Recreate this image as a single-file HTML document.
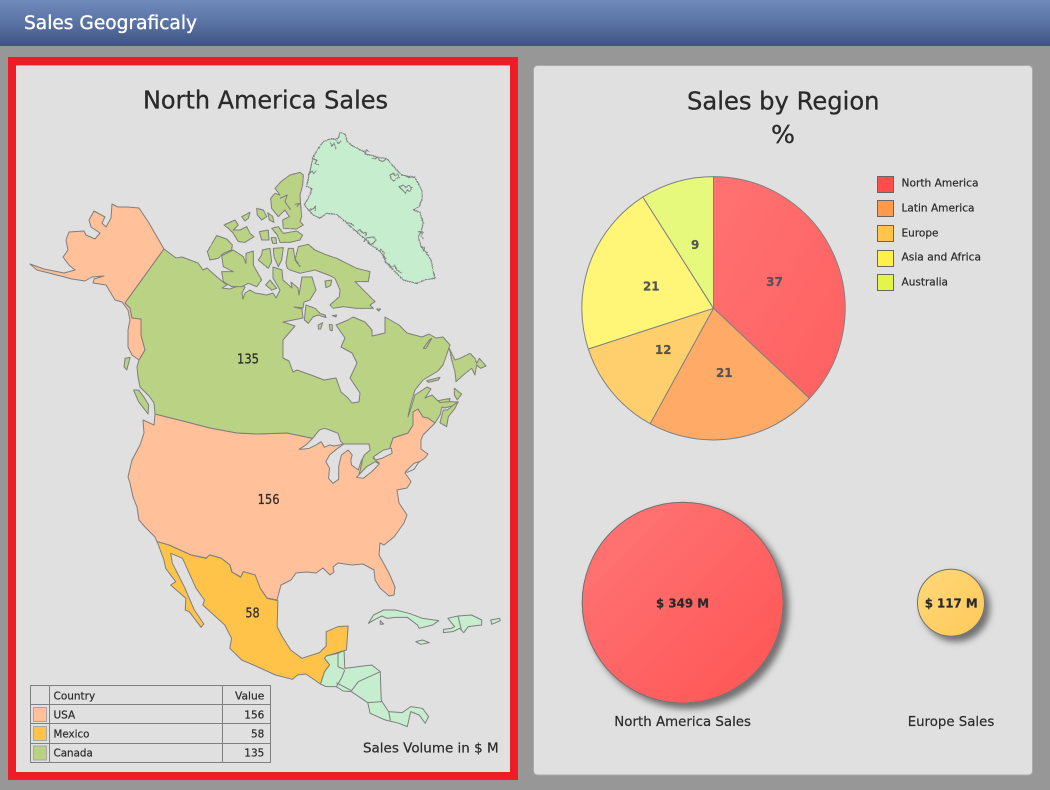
<!DOCTYPE html>
<html><head><meta charset="utf-8"><title>Sales Geograficaly</title>
<style>
html,body{margin:0;padding:0;width:1050px;height:790px;overflow:hidden;background:#979797}
svg{display:block}
text{font-family:"DejaVu Sans","Liberation Sans",sans-serif;stroke:#2a2a2a;stroke-width:.2}
.m *{vector-effect:non-scaling-stroke}
.m polygon,.m polyline,.m path{stroke:#7e7e7e;stroke-width:1;stroke-linejoin:round}
.ca{fill:#b9d283}.us{fill:#ffc09a}.mx{fill:#ffc34a}.ot{fill:#c6edce}.lk{fill:#e0e0e0}
.ln{fill:none}
</style></head><body>
<svg width="1050" height="790" viewBox="0 0 1050 790" xmlns="http://www.w3.org/2000/svg">
<defs>
<linearGradient id="hd" x1="0" y1="0" x2="0" y2="1"><stop offset="0" stop-color="#708abc"/><stop offset=".5" stop-color="#5a73a5"/><stop offset="1" stop-color="#3e5380"/></linearGradient>
<linearGradient id="rd" x1="0" y1="0" x2="1" y2="1"><stop offset="0" stop-color="#ff7777"/><stop offset=".8" stop-color="#ff5a5a"/></linearGradient>
<linearGradient id="rp" x1="0" y1="0" x2="1" y2="1"><stop offset="0" stop-color="#ff7272"/><stop offset="1" stop-color="#ff6060"/></linearGradient>
<linearGradient id="yb" x1="0" y1="0" x2="1" y2="1"><stop offset="0" stop-color="#ffd878"/><stop offset="1" stop-color="#ffc95a"/></linearGradient>
<filter id="sh" x="-20%" y="-20%" width="150%" height="150%"><feDropShadow dx="5" dy="5" stdDeviation="3.5" flood-color="#000" flood-opacity=".5"/></filter>
<filter id="rg" x="-5%" y="-5%" width="110%" height="110%" color-interpolation-filters="sRGB"><feTurbulence type="fractalNoise" baseFrequency=".28" numOctaves="2" seed="4"/><feDisplacementMap in="SourceGraphic" scale="6" xChannelSelector="R" yChannelSelector="G"/></filter>
<filter id="rs" x="-5%" y="-5%" width="110%" height="110%" color-interpolation-filters="sRGB"><feTurbulence type="fractalNoise" baseFrequency=".3" numOctaves="2" seed="7"/><feDisplacementMap in="SourceGraphic" scale="3" xChannelSelector="R" yChannelSelector="G"/></filter>
</defs>

<rect width="1050" height="790" fill="#979797"/>
<rect width="1050" height="46" fill="url(#hd)"/>
<text x="24" y="29" font-size="18.5" fill="#fff" style="stroke:#fff;stroke-width:.35" textLength="173" lengthAdjust="spacingAndGlyphs">Sales Geograficaly</text>

<rect x="8" y="57" width="510" height="723" fill="#ee1c25"/>
<rect x="16" y="65" width="494" height="707" fill="#e0e0e0"/>
<rect x="16" y="65" width="494" height="1" fill="#aaa"/>
<text x="143" y="108.6" font-size="24.5" fill="#2a2a2a" style="stroke-width:.3" textLength="245" lengthAdjust="spacingAndGlyphs">North America Sales</text>

<g class="m">
<polygon class="us" points="164,249 149,223 139,208 128,207 118,207 112,204 111,218 106,227 102,223 105,217 94,211 89,220 91,227 100,233 95,239 86,235 84,231 69,232 66,240 68,250 63,257 69,265 75,270 64,273 44,269 30,264 37,270 49,273 72,279 85,281 92,277 104,276 94,279 93,283 106,285 115,300 122,302 128,310 130,320 128,330 128,347 132,355 139,360 145,350 141,335 141,319 132,318 130,308 125,303"/>
<polygon class="us" points="155,414 179,420 210,428 237,433 257,434 287,433 311,438 343,444 365,447 361,467 359,475 369,470 379,463 373,458 381,455 392,452 390,447 393,438 408,433 413,425 413,412 418,409 423,417 428,418 435,423 428,430 423,435 421,440 421,449 425,452 428,454 425,458 422,460 415,465 407,470 405,473 410,480 411,482 407,488 397,490 399,503 407,515 404,523 394,537 384,545 380,543 379,555 389,573 395,587 394,595 389,596 380,588 375,580 374,570 363,564 352,565 338,563 333,567 334,572 330,575 323,568 316,573 306,572 296,573 291,580 281,585 277,600 267,598 260,588 255,575 243,572 241,577 232,572 230,565 221,558 210,555 206,558 191,555 169,545 157,542 155,537 145,527 139,520 137,507 133,497 130,483 128,477 132,460 140,445 144,433 143,420 154,425"/>
<polygon class="ca" points="164,249 176,258 182,257 198,263 203,270 207,268 217,277 223,282 227,285 222,288 230,289 240,285 245,287 242,293 243,299 245,293 250,290 255,293 267,295 273,293 276,298 280,290 273,278 273,267 282,270 283,280 292,288 291,282 298,288 299,295 302,277 312,277 316,290 310,300 304,302 303,308 294,307 302,309 303,318 283,322 295,326 283,340 283,358 289,361 293,372 297,370 311,375 324,380 336,378 341,392 348,398 352,403 359,402 360,393 350,378 357,363 352,353 341,347 345,338 336,325 348,320 353,317 365,322 372,330 372,336 385,333 385,317 399,325 407,333 422,337 429,334 436,338 443,337 450,345 443,365 438,371 423,380 415,390 410,407 408,417 412,405 415,395 427,387 431,389 425,398 432,395 438,401 457,402 455,405 445,408 442,407 440,415 435,423 428,418 423,417 418,409 413,412 413,425 408,433 393,438 390,447 392,452 381,455 373,458 379,463 369,470 359,475 361,467 365,447 343,444 325,437 311,438 287,433 257,434 237,433 210,428 179,420 155,414 154,403 149,396 140,387 138,377 137,367 139,360 145,350 141,335 141,319 132,318 130,308 125,303"/>
<g transform="translate(0,270) scale(.338,.3333)">
<polygon class="lk" points="885,538 905,525 925,505 945,480 960,475 975,480 1000,490 1008,515 1017,522 990,528 975,525 960,532 950,515 935,525 915,535 900,537"/>
<polygon class="lk" points="1017,522 1092,522 1095,540 1078,555 1068,575 1060,600 1040,585 1038,570 1042,555 1030,540 1010,555 1002,590 1002,628 985,640 972,625 975,595 964,575 975,555 995,538"/>
<polygon class="lk" points="1055,622 1075,625 1100,605 1122,582 1110,575 1085,590 1068,608"/>
<polygon class="lk" points="1105,560 1135,540 1158,535 1160,550 1130,565 1110,570"/>
<polygon class="ca" points="395,360 410,395 438,432 440,405 425,380 410,360"/>
<polygon class="ca" points="370,265 385,262 375,300 367,290"/>
<polygon class="lk" points="1200,605 1225,580 1240,575 1225,598 1205,607"/>
</g>
<g transform="translate(360,330) scale(.3333)" filter="url(#rs)">
<polygon class="ca" points="268,55 285,90 300,85 330,70 345,85 350,100 358,85 378,108 362,115 350,105 345,135 335,115 310,135 288,155 285,125 275,90"/>
<polygon class="ca" points="240,278 260,290 265,260 285,235 295,215 280,225 262,240 250,240"/>
<polygon class="ca" points="283,175 305,192 292,210 283,195"/>
<polygon class="ca" points="235,212 270,205 268,215 240,218"/>
<polygon class="ca" points="200,152 240,142 235,150 205,157"/>
<polygon class="ca" points="190,55 198,55 215,25 208,30"/>
</g>
<g transform="translate(200,165) scale(.3333)" filter="url(#rs)">
<polygon class="ca" points="225,70 245,48 270,30 300,22 310,30 308,60 300,90 302,120 305,155 300,170 310,180 290,192 250,190 248,165 268,155 255,135 235,155 215,130 212,100 225,85 240,90"/>
<polygon class="ca" points="215,190 235,185 250,205 290,198 308,210 300,225 270,232 240,232 232,210"/>
<polygon class="ca" points="72,180 105,165 115,180 100,195 120,195 140,185 150,205 162,215 135,232 115,230 100,205 85,190"/>
<polygon class="ca" points="170,130 190,135 200,155 185,165 172,150"/>
<polygon class="ca" points="125,155 150,142 145,160 135,168"/>
<polygon class="ca" points="203,143 218,155 222,172 208,165"/>
<polygon class="ca" points="178,200 205,195 207,225 185,225"/>
<polygon class="ca" points="213,218 228,218 230,235 218,235"/>
<polygon class="ca" points="50,212 80,222 97,240 95,255 70,265 55,280 30,285 22,260"/>
<polygon class="ca" points="65,272 100,255 130,275 138,295 138,265 160,258 160,300 185,345 170,365 145,355 125,365 95,365 70,350 65,320 100,320 70,305"/>
<polygon class="ca" points="187,255 210,250 215,290 205,310 175,285 185,270"/>
<polygon class="ca" points="220,250 250,248 245,285 235,305 222,275"/>
<polygon class="ca" points="197,360 210,345 230,370 215,375"/>
<polygon class="ca" points="270,315 300,325 345,315 385,330 405,340 420,375 418,395 390,420 400,430 430,425 470,430 520,430 510,420 525,410 500,385 465,350 505,350 510,320 470,310 440,295 410,280 375,268 345,255 325,238 295,245 285,285 300,305 285,280 280,250 265,250 258,295 262,310"/>
<polygon class="ca" points="375,348 395,345 392,362 378,368"/>
<polygon class="ca" points="318,420 345,430 360,445 375,450 378,458 355,450 340,455 325,475 313,465"/>
<polygon class="ca" points="355,480 368,473 362,492 355,492"/>
<polygon class="ca" points="388,478 397,480 397,497 390,495"/>
<polygon class="ca" points="530,432 542,432 536,438"/>
<polygon class="ca" points="397,452 410,450 408,456"/>
<polyline class="ln" points="240,100 262,90 255,110 272,135"/>
<polyline class="ln" points="285,118 300,115 290,125"/>
</g>
<g transform="translate(295,125) scale(.3333)" filter="url(#rg)">
<polygon class="ot" points="135,22 150,28 157,50 172,62 190,72 205,78 215,88 235,92 250,98 275,100 290,118 305,135 320,150 345,155 360,158 370,175 380,195 382,220 372,245 355,255 375,262 385,295 378,320 370,335 378,365 395,385 408,405 415,440 420,460 395,463 365,475 325,465 295,435 275,415 260,385 245,370 230,362 215,345 195,330 175,312 150,290 125,268 95,265 75,280 55,270 40,255 28,240 45,210 50,190 35,185 42,150 48,125 55,95 70,70 85,50 105,42 120,42 130,40"/>
<path class="ln" d="M285,150l10,-5 5,8 8,-6 5,10 -10,4 -4,8 -10,-6zM312,185l12,-4 8,6 10,-6 8,8 -6,10 -8,-4 -4,10 -8,-8 -6,-6zM52,100l14,6 -6,10 12,4M40,148l12,-10 4,8 8,-10M105,50l6,14 6,-10 6,18M120,42l10,14 8,-8M42,255l14,-4 6,-8 -2,14M145,285l12,8 10,2 10,8M185,320l10,-6 8,10 12,-2 -4,12M205,350l12,-12 18,-2 8,10 -14,14 -12,-6M245,372l10,8 2,-6 12,10 -4,6 8,12M268,410l14,8 6,8 12,-4 6,14 14,8M210,88l4,-14 8,6M230,98l10,4 8,-6 6,10 10,4 8,-8M355,155l-14,2 -10,-4M370,320l14,2 -6,12 8,8M378,365l12,2 -4,10 12,6"/>
</g>
<g transform="translate(0,530) scale(.338,.3333)">
<polygon class="ot" points="948,462 960,425 975,405 960,385 965,378 1000,370 1018,362 1020,415 1060,410 1100,405 1125,425 1128,510 1130,515 1150,545 1190,548 1215,530 1250,535 1268,560 1258,580 1240,555 1215,545 1205,590 1180,580 1140,570 1095,550 1088,518 1040,485 1015,483 995,470 965,470"/>
<polyline class="ln" points="1000,370 1000,410 1018,418"/>
<polyline class="ln" points="1020,420 1010,445 995,470"/>
<polyline class="ln" points="995,458 1040,482"/>
<polyline class="ln" points="1040,482 1060,455 1125,425"/>
<polyline class="ln" points="1088,518 1130,515"/>
<polyline class="ln" points="1150,545 1155,572"/>
<polygon class="mx" points="465,35 500,45 565,75 610,85 620,75 655,85 680,105 685,125 712,142 720,125 755,135 770,175 790,205 822,212 820,290 835,320 860,360 893,385 945,368 965,348 965,305 1000,290 1030,288 1025,360 1018,362 965,378 960,385 975,405 960,425 948,462 905,432 880,435 865,448 815,435 750,405 715,390 680,355 685,325 665,285 600,225 605,210 580,175 540,85 505,70 510,100 545,170 575,240 603,282 595,292 560,245 548,240 550,205 505,165 520,155 490,115 485,90"/>
<polygon class="ot" points="1090,280 1105,255 1135,240 1170,240 1210,250 1250,265 1298,272 1280,285 1240,295 1235,285 1205,262 1170,262 1145,265 1130,258 1110,268"/>
<polygon class="ot" points="1125,272 1135,282 1125,283"/>
<polygon class="ot" points="1325,265 1355,258 1395,255 1425,270 1425,285 1385,290 1372,308 1360,295 1340,305 1312,308 1312,298 1335,295 1345,290"/>
<polyline class="ln" points="1355,258 1365,300"/>
<polygon class="ot" points="1230,335 1250,330 1270,338 1245,343"/>
<polygon class="ot" points="1452,270 1478,265 1480,272 1455,283"/>
</g>
</g>

<g font-size="13" fill="#2a2a2a">
<text x="237" y="363.3" textLength="22" lengthAdjust="spacingAndGlyphs">135</text>
<text x="257.6" y="504" textLength="22" lengthAdjust="spacingAndGlyphs">156</text>
<text x="245.4" y="617.7" textLength="14.3" lengthAdjust="spacingAndGlyphs">58</text>
</g>

<g fill="none" stroke="#808080" stroke-width="1">
<rect x="30.5" y="685.5" width="240" height="77"/>
<path d="M30.5 704.5H270.5M30.5 723.5H270.5M30.5 743.5H270.5M49.5 685.5V762.5M222.5 685.5V762.5"/>
</g>
<rect x="33.5" y="707.5" width="13" height="14" fill="#ffc09a" stroke="#a8a8a8"/>
<rect x="33.5" y="726.5" width="13" height="14" fill="#ffc34a" stroke="#a8a8a8"/>
<rect x="33.5" y="746" width="13" height="14" fill="#b9d283" stroke="#a8a8a8"/>
<g font-size="11" fill="#2a2a2a">
<text x="53.5" y="699.3" textLength="41.7" lengthAdjust="spacingAndGlyphs">Country</text>
<text x="53.5" y="718.3" textLength="21.7" lengthAdjust="spacingAndGlyphs">USA</text>
<text x="53.5" y="737.3" textLength="36" lengthAdjust="spacingAndGlyphs">Mexico</text>
<text x="53.5" y="756.3" textLength="39.3" lengthAdjust="spacingAndGlyphs">Canada</text>
<text x="235" y="699.3" textLength="29.3" lengthAdjust="spacingAndGlyphs">Value</text>
<text x="244.3" y="718.3" textLength="20" lengthAdjust="spacingAndGlyphs">156</text>
<text x="251" y="737.3" textLength="13.3" lengthAdjust="spacingAndGlyphs">58</text>
<text x="244.3" y="756.3" textLength="20" lengthAdjust="spacingAndGlyphs">135</text>
</g>
<text x="363" y="752.3" font-size="13.5" fill="#2a2a2a" textLength="135.6" lengthAdjust="spacingAndGlyphs">Sales Volume in $ M</text>

<rect x="533.5" y="65.5" width="499" height="709.5" rx="4" fill="#e0e0e0" stroke="#ababab"/>
<text x="687" y="109.4" font-size="24.5" fill="#2a2a2a" style="stroke-width:.3" textLength="192.5" lengthAdjust="spacingAndGlyphs">Sales by Region</text>
<text x="771" y="143" font-size="24.5" fill="#2a2a2a" style="stroke-width:.3" textLength="24" lengthAdjust="spacingAndGlyphs">%</text>

<g stroke="#808080" stroke-width="1" stroke-linejoin="round">
<path d="M713.5 308.3V176.6A131.7 131.7 0 0 1 809.5 398.4Z" fill="url(#rp)"/>
<path d="M713.5 308.3L809.5 398.4A131.7 131.7 0 0 1 650.1 423.7Z" fill="#ffab67"/>
<path d="M713.5 308.3L650.1 423.7A131.7 131.7 0 0 1 588.3 349Z" fill="#ffcf6e"/>
<path d="M713.5 308.3L588.3 349A131.7 131.7 0 0 1 642.9 197.1Z" fill="#fff577"/>
<path d="M713.5 308.3L642.9 197.1A131.7 131.7 0 0 1 713.5 176.6Z" fill="#e7f97c"/>
</g>
<g font-size="12" font-weight="bold" fill="#555" style="stroke:#555">
<text x="766" y="286" textLength="17" lengthAdjust="spacingAndGlyphs" style="stroke:#555">37</text>
<text x="716" y="377" textLength="16.5" lengthAdjust="spacingAndGlyphs" style="stroke:#555">21</text>
<text x="655" y="354" textLength="16.5" lengthAdjust="spacingAndGlyphs" style="stroke:#555">12</text>
<text x="643" y="290.7" textLength="16.5" lengthAdjust="spacingAndGlyphs" style="stroke:#555">21</text>
<text x="691" y="249" textLength="8.3" lengthAdjust="spacingAndGlyphs" style="stroke:#555">9</text>
</g>

<g stroke="#666">
<rect x="877.5" y="176.5" width="16" height="16" fill="#ff4d4d"/>
<rect x="877.5" y="200.5" width="16" height="16" fill="#ff9a4a"/>
<rect x="877.5" y="225.5" width="16" height="16" fill="#ffc44a"/>
<rect x="877.5" y="250.5" width="16" height="16" fill="#fff14a"/>
<rect x="877.5" y="274.5" width="16" height="16" fill="#e1f54a"/>
</g>
<g font-size="11" fill="#2a2a2a">
<text x="901.5" y="186.5" textLength="77" lengthAdjust="spacingAndGlyphs">North America</text>
<text x="901.5" y="211.5" textLength="73" lengthAdjust="spacingAndGlyphs">Latin America</text>
<text x="901.5" y="236.5" textLength="37" lengthAdjust="spacingAndGlyphs">Europe</text>
<text x="901.5" y="260.5" textLength="79.5" lengthAdjust="spacingAndGlyphs">Asia and Africa</text>
<text x="901.5" y="285.5" textLength="46.5" lengthAdjust="spacingAndGlyphs">Australia</text>
</g>

<circle cx="682.7" cy="602.7" r="100.5" fill="url(#rd)" stroke="#707070" filter="url(#sh)"/>
<circle cx="951" cy="602.7" r="33.5" fill="url(#yb)" stroke="#707070" filter="url(#sh)"/>
<g font-size="12" font-weight="bold" fill="#2a2a2a">
<text x="656" y="607.5" textLength="53" lengthAdjust="spacingAndGlyphs">$ 349 M</text>
<text x="924.7" y="607.5" textLength="53" lengthAdjust="spacingAndGlyphs">$ 117 M</text>
</g>
<g font-size="13.5" fill="#2a2a2a">
<text x="614.3" y="726" textLength="136.7" lengthAdjust="spacingAndGlyphs">North America Sales</text>
<text x="907.7" y="726" textLength="86.6" lengthAdjust="spacingAndGlyphs">Europe Sales</text>
</g>
</svg>
</body></html>
